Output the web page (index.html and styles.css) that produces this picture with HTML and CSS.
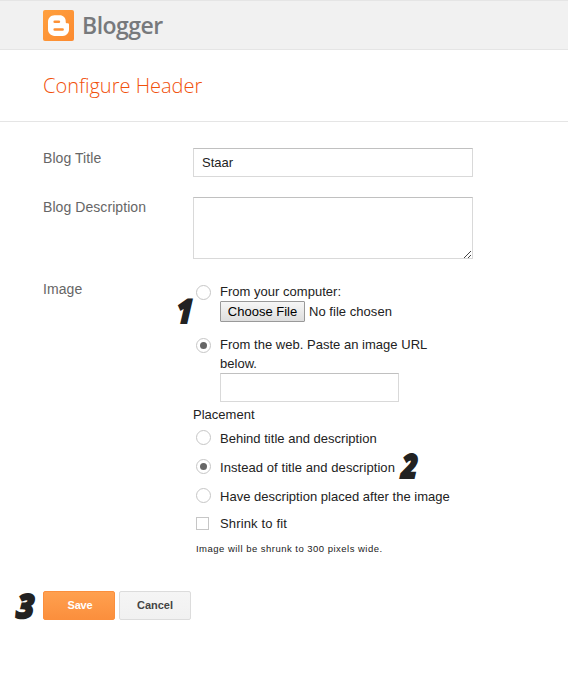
FILE: index.html
```html
<!DOCTYPE html>
<html lang="en">
<head>
<meta charset="utf-8">
<title>Configure Header</title>
<link rel="stylesheet" href="styles.css">
</head>
<body>
<header class="topbar">
  <svg class="logo" width="31" height="31" viewBox="0 0 31 31" aria-hidden="true">
    <defs><linearGradient id="lg" x1="0" y1="0" x2="1" y2="1"><stop offset="0" stop-color="#ffa03e"/><stop offset="1" stop-color="#fc8a30"/></linearGradient></defs>
    <rect width="31" height="31" rx="2" fill="url(#lg)"/>
    <path d="M11.500 5.300h5.200c3.500 0 6 2.600 6 5.600v1c0 .9.5 1.400 1.400 1.400h.6c.8 0 1.300.6 1.300 1.300v4.900c0 3.500-2.700 6.400-6.200 6.400h-8.300c-3.500 0-6.500-2.800-6.500-6.300v-7.800c0-3.600 2.800-6.500 6.500-6.500z" fill="#fff"/>
    <path d="M11.700 11.700h4.200M11.700 19.500h7.900" stroke="#fd9135" stroke-width="2.600" stroke-linecap="round"/>
  </svg>
  <span class="brand">Blogger</span>
</header>
<div class="heading"><h1>Configure Header</h1></div>
<main>
  <div class="row title-row">
    <label class="label" for="t">Blog Title</label>
    <input id="t" class="field title-field" type="text" value="Staar">
  </div>
  <div class="row desc-row">
    <label class="label" for="d">Blog Description</label>
    <div class="area-wrap">
      <textarea id="d" class="field"></textarea>
      <svg class="grip" width="8" height="8" viewBox="0 0 8 8" shape-rendering="crispEdges" aria-hidden="true"><path d="M0 7h1v1h-1zM1 6h1v1h-1zM2 5h1v1h-1zM3 4h1v1h-1zM4 3h1v1h-1zM5 2h1v1h-1zM6 1h1v1h-1zM4 7h1v1h-1zM5 6h1v1h-1zM6 5h1v1h-1z" fill="#444"/></svg>
    </div>
  </div>
  <div class="row image-row">
    <div class="label">Image</div>
    <div class="options">
      <div class="option upload">
        <span class="radio"></span>
        <div>
          <div class="text from-pc">From your computer:</div>
          <div class="file"><button class="choose">Choose File</button><span class="nofile">No file chosen</span></div>
        </div>
        <span class="mark mark-1">1</span>
      </div>
      <div class="option web">
        <span class="radio on"></span>
        <div>
          <div class="text from-web">From the web. Paste an image URL<br>below.</div>
          <input class="field url-field" type="text" aria-label="Image URL">
        </div>
      </div>
      <div class="text placement">Placement</div>
      <div class="option place"><span class="radio"></span><span class="text behind">Behind title and description</span></div>
      <div class="option place"><span class="radio on"></span><span class="text instead">Instead of title and description</span><span class="mark mark-2">2</span></div>
      <div class="option place"><span class="radio"></span><span class="text have">Have description placed after the image</span></div>
      <div class="option shrink"><span class="check"></span><span class="text shrink-text">Shrink to fit</span></div>
      <div class="note">Image will be shrunk to 300 pixels wide.</div>
    </div>
  </div>
  <div class="actions">
    <span class="mark mark-3">3</span>
    <button class="btn save">Save</button>
    <button class="btn cancel">Cancel</button>
  </div>
</main>
</body>
</html>
```
FILE: styles.css
```css
* { box-sizing: border-box; }
body { margin: 0; background: #fff; color: #222; font: 13px/19px "Liberation Sans", Arial, sans-serif; }
.topbar { height: 50px; display: flex; align-items: flex-start; background: #f1f1f1; border-top: 1px solid #e5e5e5; border-bottom: 1px solid #e5e5e5; padding: 9px 0 0 43px; }
.brand { margin-left: 8px; font: 600 23px/31px "Open Sans", sans-serif; color: #77797c; letter-spacing: -0.5px; }
.heading { height: 72px; border-bottom: 1px solid #e5e5e5; padding: 21px 0 0 43px; }
h1 { margin: 0; font: 300 20px/30px "Open Sans", sans-serif; color: #f1500a; }
main { padding: 26px 0 0 43px; }
.row { display: flex; align-items: flex-start; }
.label { width: 150px; flex: none; font-size: 14px; line-height: 20px; color: #666; letter-spacing: 0.07px; }
.title-row { height: 49px; }
.desc-row { height: 88px; }
.image-row { height: 306px; }
.image-row .label { margin-top: -6px; }
.field { display: block; margin: 0; border: 1px solid #d9d9d9; border-top-color: #c0c0c0; background: #fff; color: #222; font: 13px/17px "Liberation Sans", Arial, sans-serif; padding: 0 8px; outline: 0; resize: none; border-radius: 0; }
.title-field { width: 280px; height: 29px; }
.area-wrap { position: relative; width: 280px; height: 62px; }
.area-wrap .field { width: 100%; height: 100%; }
.grip { position: absolute; right: 1px; bottom: 1px; }
.options { width: 300px; }
.option { position: relative; display: flex; align-items: flex-start; padding-left: 3px; }
.upload { height: 53px; }
.radio { width: 15px; height: 15px; flex: none; border: 1px solid #c6c6c6; border-radius: 50%; margin-right: 9px; display: flex; align-items: center; justify-content: center; }
.radio.on::after { content: ""; width: 7px; height: 7px; border-radius: 50%; background: #666; }
.text { white-space: nowrap; letter-spacing: 0.02px; }
.instead { letter-spacing: 0.07px; }
.from-pc { margin-top: -3px; }
.from-web { margin-top: -3px; height: 38px; }
.file { display: flex; align-items: center; height: 21px; }
.choose { width: 85px; height: 21px; margin: 0 4px 0 0; padding: 0; border: 1px solid #999; border-radius: 1px; background: linear-gradient(#f6f6f6, #dedede); color: #000; font: 13px/17px "Liberation Sans", Arial, sans-serif; }
.nofile { white-space: nowrap; letter-spacing: 0.04px; }
.url-field { width: 179px; height: 29px; }
.web { height: 67px; }
.placement { height: 24px; }
.place { height: 29px; }
.place .radio { margin-top: 1px; }
.shrink { height: 28px; margin-top: -2px; }
.shrink-text { letter-spacing: 0.15px; }
.check { width: 13px; height: 13px; border: 1px solid #c6c6c6; margin: 3px 11px 0 0; }
.note { font-size: 9.5px; line-height: 13px; padding-left: 3px; letter-spacing: 0.48px; white-space: nowrap; }
.mark { position: absolute; font: italic 800 33px/31px "Open Sans", sans-serif; color: #222; -webkit-text-stroke: 2px #222; stroke-linejoin: round; transform: skewX(-3deg) scaleX(.84); }
.mark-1 { left: -18px; top: 10px; }
.mark-2 { left: 207px; top: -8px; }
.mark-3 { left: -27px; top: -1px; }
.mark-3 { transform: skewX(-5deg) scaleX(.92); }
.actions { position: relative; display: flex; gap: 4px; }
.btn { width: 72px; height: 29px; margin: 0; padding: 0; border-radius: 2px; font: bold 11px/27px "Liberation Sans", Arial, sans-serif; }
.save { border: 1px solid #fb8f3d; background: linear-gradient(#ffa04f, #fb8f3d); color: #fff; padding-left: 2px; letter-spacing: -0.2px; }
.cancel { border: 1px solid #dcdcdc; background: linear-gradient(#f5f5f5, #f1f1f1); color: #444; }
```
